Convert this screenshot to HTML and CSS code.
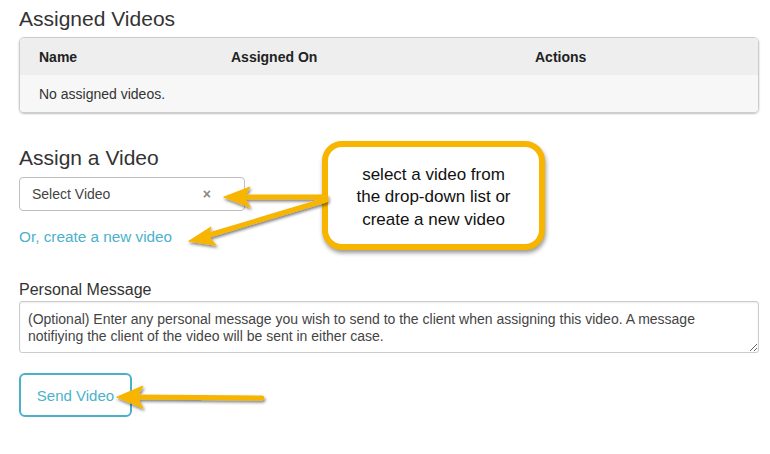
FILE: index.html
```html
<!DOCTYPE html>
<html>
<head>
    <title>Assign Video</title>
    <link rel="stylesheet" href="styles.css">
</head>
<body>
    <div class="page">
        <h2>Assigned Videos</h2>
        <div class="panel">
            <table class="videos">
                <thead>
                    <tr>
                        <th class="col-name">Name</th>
                        <th class="col-date">Assigned On</th>
                        <th>Actions</th>
                    </tr>
                </thead>
                <tbody>
                    <tr>
                        <td colspan="3">No assigned videos.</td>
                    </tr>
                </tbody>
            </table>
        </div>

        <h2 class="assign-title">Assign a Video</h2>
        <div class="select-box">
            <span>Select Video</span>
            <span class="clear">&times;</span>
        </div>
        <a class="create-link" href="#">Or, create a new video</a>

        <label class="field-label" for="message">Personal Message</label>
        <textarea id="message" class="message" placeholder="(Optional) Enter any personal message you wish to send to the client when assigning this video. A message notifiying the client of the video will be sent in either case."></textarea>

        <button class="send-btn">Send Video</button>
    </div>

    <!-- annotation overlay -->
    <div class="callout">select a video from the drop-down list or create a new video</div>
    <svg class="arrows" width="770" height="454" viewBox="0 0 770 454">
        <defs>
            <filter id="shadow" x="-10%" y="-30%" width="130%" height="180%">
                <feDropShadow dx="1" dy="2" stdDeviation="1.5" flood-color="#000" flood-opacity="0.5"/>
            </filter>
        </defs>
        <g filter="url(#shadow)" fill="#f7b500" stroke="#f7b500" stroke-linecap="round" stroke-linejoin="round">
            <line x1="326" y1="197" x2="240" y2="197" stroke-width="5"/>
            <polygon points="224,197 250,187 244,197 250,207" stroke-width="1"/>
            <line x1="326" y1="200" x2="206" y2="236" stroke-width="5"/>
            <polygon points="189,241 211,227 208,236 216,245" stroke-width="1"/>
            <line x1="262" y1="398" x2="134" y2="397" stroke-width="5"/>
            <polygon points="117,397 143,386 137,397 143,408" stroke-width="1"/>
        </g>
    </svg>
</body>
</html>
```

FILE: styles.css
```css
body {
    margin: 0;
    font-family: "Liberation Sans", Arial, sans-serif;
    color: #333;
    background: #fff;
}

.page {
    padding: 0 11px 30px 19px;
}

h2 {
    font-size: 21px;
    font-weight: normal;
    margin: 0;
    padding-top: 7px;
    line-height: 24px;
    height: 30px;
}

.panel {
    border: 1px solid #c9cdd2;
    border-radius: 5px;
    box-shadow: 0 1px 2px rgba(0, 0, 0, 0.25);
    overflow: hidden;
}

.videos {
    width: 100%;
    border-collapse: collapse;
    font-size: 14px;
}

.videos th {
    background: #eeeeee;
    text-align: left;
    height: 37px;
    padding: 0 19px;
    color: #222;
}

.videos th.col-name {
    width: 154px;
}

.videos th.col-date {
    width: 266px;
}

.videos td {
    background: #f7f7f7;
    height: 37px;
    padding: 0 19px;
    color: #333;
}

.assign-title {
    margin-top: 26px;
    padding-top: 7px;
}

.select-box {
    width: 226px;
    height: 34px;
    border: 1px solid #bfbfbf;
    border-radius: 4px;
    display: flex;
    align-items: center;
    justify-content: space-between;
    padding: 0 33px 0 12px;
    box-sizing: border-box;
    font-size: 14px;
    color: #444;
    margin-top: 1px;
}

.select-box .clear {
    color: #888;
    font-weight: bold;
    font-size: 14px;
}

.create-link {
    display: block;
    color: #4bb1cb;
    text-decoration: none;
    font-size: 15.3px;
    margin-top: 17px;
}

.field-label {
    display: block;
    font-size: 16px;
    margin-top: 35px;
    color: #333;
}

.message {
    display: block;
    width: 740px;
    height: 52px;
    box-sizing: border-box;
    margin-top: 2px;
    border: 1px solid #ccc;
    border-radius: 3px;
    padding: 9px 8px;
    font-family: "Liberation Sans", Arial, sans-serif;
    font-size: 14px;
    line-height: 17px;
    resize: vertical;
    box-shadow: inset 0 1px 2px rgba(0, 0, 0, 0.08);
}

.message::placeholder {
    color: #444;
}

.send-btn {
    margin-top: 20px;
    width: 113px;
    height: 44px;
    background: #fff;
    border: 2px solid #4bb1cb;
    border-radius: 6px;
    color: #4bb1cb;
    font-family: "Liberation Sans", Arial, sans-serif;
    font-size: 15px;
    cursor: pointer;
}

.callout {
    position: absolute;
    left: 322px;
    top: 141px;
    width: 223px;
    height: 109px;
    box-sizing: border-box;
    border: 6px solid #f7b500;
    border-radius: 20px;
    background: #fff;
    box-shadow: 1px 3px 4px rgba(0, 0, 0, 0.4);
    display: flex;
    align-items: center;
    justify-content: center;
    text-align: center;
    padding: 4px 20px 0;
    font-size: 17px;
    line-height: 22.5px;
    color: #111;
}

.arrows {
    position: absolute;
    left: 0;
    top: 0;
    pointer-events: none;
}
```
